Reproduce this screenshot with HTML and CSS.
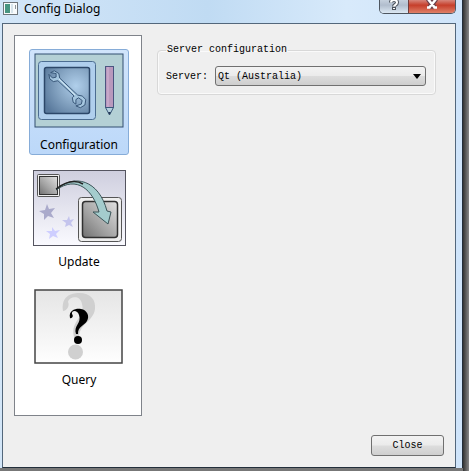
FILE: index.html
```html
<!DOCTYPE html>
<html lang="en">
<head>
  <meta charset="UTF-8">
  <meta name="viewport" content="width=device-width, initial-scale=1.0">
  <title>Config Dialog</title>
  <link rel="stylesheet" href="styles.css">
</head>
<body>

<div class="window">
  <header class="titlebar">
    <svg class="app-icon" width="15" height="13" viewBox="0 0 15 13" aria-hidden="true">
      <rect x="0.5" y="0.5" width="14" height="12" fill="#f8fbfc" stroke="#70777c"/>
      <rect x="2" y="2" width="5" height="9" fill="#489581"/>
      <rect x="8" y="2" width="2" height="9" fill="#d7e4eb"/>
      <rect x="12" y="3" width="1" height="4" fill="#8c9499"/>
    </svg>
    <h1 class="title">Config Dialog</h1>
    <div class="window-buttons">
      <button type="button" class="help-button" aria-label="Help">
        <svg width="12" height="14" viewBox="0 0 12 14">
          <path d="M3 2.5C3 -1 9 -1 9 2.5C9 5 6 4.5 6 6.5" fill="none" stroke="#4d535c" stroke-width="4"/>
          <path d="M3 2.5C3 -1 9 -1 9 2.5C9 5 6 4.5 6 6.5" fill="none" stroke="#fff" stroke-width="2"/>
          <rect x="4.5" y="7.5" width="3" height="2" fill="#fff" stroke="#4d535c"/>
        </svg>
      </button>
      <button type="button" class="exit-button" aria-label="Close window">
        <svg width="12" height="12" viewBox="0 0 12 12">
          <path d="M2 -1L9 8M10 -1L3 8" stroke="#69404a" stroke-width="5"/>
          <path d="M2 -1L9 8M10 -1L3 8M1 7.5H4.5M7.5 7.5H11" stroke="#fff" stroke-width="2.5"/>
        </svg>
      </button>
    </div>
  </header>

  <main class="client">
    <div class="content">
      <nav class="contents-list">
        <a href="#configuration" class="item selected">
          <svg width="94" height="76" viewBox="0 0 94 76" aria-hidden="true">
            <defs>
              <radialGradient id="screen" cx="0.7" cy="0.4" r="0.8">
                <stop offset="0" stop-color="#b0cfeb"/>
                <stop offset="0.5" stop-color="#86a5c3"/>
                <stop offset="1" stop-color="#58789b"/>
              </radialGradient>
            </defs>
            <rect x="3" y="1" width="88" height="73" fill="#b4d0d5" stroke="#334e70"/>
            <rect x="6.5" y="8.5" width="57" height="58" rx="3" fill="#b0cfed" stroke="#4c6d91"/>
            <rect x="12.5" y="14.5" width="45" height="46" rx="2" fill="url(#screen)" stroke="#2c4769" stroke-width="1.5"/>
            <path d="M18 19L22 17L27 20L28 25L48 44L53 45L57 49L56 55L51 58L46 56L52 54L53 50L49 47L46 49L46 54L43 52L42 47L44 45L26 28L21 29L17 26L16 21L20 25L24 24L24 20Z" transform="translate(2.5 2.5) scale(0.9)" fill="#a5c6df" stroke="#304e71"/>
            <path d="M27 26L43 42" stroke="#d2e7f3"/>
            <rect x="73.5" y="13.5" width="8" height="41" fill="#b999bd" stroke="#4b5581"/>
            <path d="M76 14V54" stroke="#d3b6d5"/>
            <path d="M73.5 54.5H81.5L77.5 62Z" fill="#b4d1df" stroke="#3b587a"/>
            <path d="M76 59H79L77.5 62Z" fill="#263b59"/>
          </svg>
          <span>Configuration</span>
        </a>
        <a href="#update" class="item">
          <svg width="94" height="76" viewBox="0 0 94 76" aria-hidden="true">
            <defs>
              <linearGradient id="sky" x1="0" y1="0" x2="0" y2="1">
                <stop offset="0" stop-color="#cecede"/>
                <stop offset="1" stop-color="#fafaff"/>
              </linearGradient>
              <linearGradient id="metal" x1="1" y1="0" x2="0" y2="1">
                <stop offset="0" stop-color="#e1e1e1"/>
                <stop offset="0.6" stop-color="#a1a1a1"/>
                <stop offset="1" stop-color="#707070"/>
              </linearGradient>
            </defs>
            <rect x="1.5" y="0.5" width="92" height="75" fill="url(#sky)" stroke="#555560"/>
            <rect x="5.5" y="4.5" width="22" height="22" rx="1" fill="#eee" stroke="#555"/>
            <rect x="7.5" y="6.5" width="18" height="18" fill="url(#metal)" stroke="#333"/>
            <path d="M15 34L17 39L23 38L19 43L22 48L16 46L12 50L12 44L7 41L13 40Z" fill="#aaaacb"/>
            <path d="M37 46L38 50L42 49L39 53L41 57L37 55L33 57L34 53L30 50L35 50Z" fill="#c4c4ed"/>
            <path d="M20 57L23 61L28 60L24 64L26 68L21 66L17 69L18 64L14 61L20 61Z" fill="#ceceff"/>
            <rect x="46.5" y="27.5" width="43" height="44" rx="3" fill="#eee" stroke="#555"/>
            <rect x="50.5" y="31.5" width="35" height="36" rx="3" fill="url(#metal)" stroke="#303030" stroke-width="1.5"/>
            <path d="M24 20C42 3 67 10 75 41L79 42L76 54L61 42L67 42C61 20 45 5 24 20Z" fill="#a4cccd" stroke="#3c5559"/>
            <path d="M24 19C36 10 44 10 51 14" fill="none" stroke="#222" stroke-width="1.5"/>
          </svg>
          <span>Update</span>
        </a>
        <a href="#query" class="item">
          <svg width="94" height="76" viewBox="0 0 94 76" aria-hidden="true">
            <defs>
              <linearGradient id="paper" x1="0" y1="0" x2="0" y2="1">
                <stop offset="0" stop-color="#e5e5e5"/>
                <stop offset="1" stop-color="#fefefe"/>
              </linearGradient>
            </defs>
            <rect x="3" y="2" width="87" height="73" fill="url(#paper)" stroke="#444" stroke-width="1.5"/>
            <path d="M31 23C29 8 39 5 47 5C59 5 64 12 63 21C61 35 46 35 47 52H43C36 33 54 30 50 16C48 6 37 9 36 14C38 17 35 23 31 23Z" fill="#d0d0d0"/>
            <circle cx="43.5" cy="64" r="7.5" fill="#d0d0d0"/>
            <path d="M38 30C36 21 46 20 49 21C55 22 58 28 55 33C52 38 46 38 46 46H44C41 38 50 35 47 27C45 21 39 23 40 26C42 28 40 31 38 30Z" fill="#000"/>
            <circle cx="46" cy="52" r="4" fill="#000"/>
          </svg>
          <span>Query</span>
        </a>
      </nav>

      <section class="page" id="configuration">
        <fieldset class="group-box">
          <legend>Server configuration</legend>
          <div class="field">
            <label for="server">Server:</label>
            <div class="combo">
              <select id="server">
                <option>Qt (Australia)</option>
              </select>
              <svg class="arrow" width="8" height="5" viewBox="0 0 8 5" aria-hidden="true">
                <path d="M0 0H8L4 5Z" fill="#000"/>
              </svg>
            </div>
          </div>
        </fieldset>
      </section>
    </div>

    <footer class="actions">
      <button type="button" class="close-button">Close</button>
    </footer>
  </main>
</div>

</body>
</html>
```

FILE: styles.css
```css
* {
  box-sizing: border-box;
}

body {
  margin: 0;
  min-height: 100vh;
  display: flex;
  padding: 0 6px 3px 0;
  background: linear-gradient(to right, #333, #888) right / 6px 100% no-repeat, #777;
  font-family: "Liberation Mono", monospace;
  font-size: 10px;
  color: #000;
}

.window {
  flex: 1;
  display: flex;
  flex-direction: column;
  padding: 0 6px 0 2px;
  border-right: 1px solid #222e3a;
  background: linear-gradient(to right, #d3e6f8, #c0dbf3 45%, #d8eafb 75%, #cfe4fa);
}

.titlebar {
  display: flex;
  align-items: flex-start;
  height: 23px;
  padding-left: 1px;
}

.app-icon {
  margin-top: 2px;
}

.title {
  flex: 1;
  margin: 0 0 0 6px;
  font: 12px/18px "Noto Sans", sans-serif;
}

.window-buttons {
  display: flex;
  height: 14px;
  border: 1px solid #4e5660;
  border-top: none;
  border-radius: 0 0 5px 5px;
  overflow: hidden;
}

.window-buttons button {
  display: flex;
  align-items: flex-start;
  justify-content: center;
  padding: 0;
  border: none;
}

.window-buttons .help-button {
  width: 28px;
  background: linear-gradient(#c5d0dd, #b1bdcd 40%, #dce8f3);
}

.window-buttons .exit-button {
  width: 47px;
  border-left: 1px solid #703c3c;
  background: linear-gradient(#d7867b, #c63f2b 40%, #df8068);
}

.client {
  flex: 1;
  display: flex;
  flex-direction: column;
  padding: 11px;
  border: 1px solid #53677b;
  border-bottom-color: #222e3a;
  background: #efefef;
}

.content {
  display: flex;
  align-items: flex-start;
  gap: 15px;
}

.contents-list {
  display: flex;
  flex-direction: column;
  gap: 12px;
  width: 128px;
  padding: 13px 12px 24px 14px;
  border: 1px solid #7f838a;
  background: #fff;
}

.item {
  display: flex;
  flex-direction: column;
  align-items: center;
  gap: 7px;
  height: 106px;
  padding-top: 2px;
  border: 1px solid transparent;
  border-radius: 3px;
  font: 12px/18px "Noto Sans", sans-serif;
  color: #000;
  text-decoration: none;
}

.item svg {
  flex-shrink: 0;
}

.item.selected {
  padding-top: 3px;
  border-color: #86acd8;
  background: linear-gradient(#d0e4fb, #bcd8f9);
}

.page {
  flex: 1;
  padding: 9px 8px 0 0;
}

.group-box {
  margin: 0;
  padding: 10px 9px 8px 8px;
  border: 1px solid #d8d8d8;
  border-radius: 4px;
  box-shadow: inset 0 0 0 1px #fafafa;
}

.group-box legend {
  padding: 0 1px;
  line-height: 12px;
}

.field {
  display: flex;
  align-items: center;
  gap: 7px;
}

.combo {
  position: relative;
  flex: 1;
}

.combo select {
  display: block;
  width: 100%;
  height: 20px;
  padding: 0 20px 0 2px;
  appearance: none;
  border: 1px solid #707070;
  border-radius: 3px;
  background: linear-gradient(#f3f3f3, #ebebeb 48%, #dcdcdc 52%, #cecece);
  font: inherit;
  color: #000;
}

.arrow {
  position: absolute;
  top: 8px;
  right: 5px;
}

.actions {
  display: flex;
  justify-content: flex-end;
  margin-top: auto;
}

.close-button {
  width: 73px;
  height: 21px;
  padding: 0;
  border: 1px solid #707070;
  border-radius: 3px;
  background: linear-gradient(#f3f3f3, #ebebeb 48%, #dddddd 52%, #cfcfcf);
  font: inherit;
  color: #000;
}
```
